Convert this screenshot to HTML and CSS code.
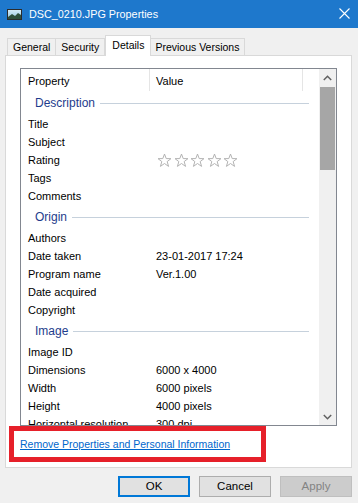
FILE: index.html
```html
<!DOCTYPE html>
<html>
<head>
<meta charset="utf-8">
<link rel="stylesheet" href="styles.css">
</head>
<body>
<div class="window">
  <div class="titlebar">
    <svg class="app-icon" width="15" height="11" viewBox="0 0 15 11">
      <defs>
        <linearGradient id="sky" x1="0" y1="0" x2="0" y2="1">
          <stop offset="0" stop-color="#d9eef8"/>
          <stop offset="1" stop-color="#8fc3de"/>
        </linearGradient>
      </defs>
      <rect x="0.5" y="0.5" width="14" height="10" fill="url(#sky)" stroke="#2b2b2b"/>
      <path d="M1 8 L5 5 L8 7 L11 4 L14 6 L14 10 L1 10 Z" fill="#2f4f3a"/>
    </svg>
    <span class="title">DSC_0210.JPG Properties</span>
    <svg class="close" width="11" height="11" viewBox="0 0 11 11">
      <path d="M0.5 0.5 L10.5 10.5 M10.5 0.5 L0.5 10.5" stroke="#ffffff" stroke-width="1.1" fill="none"/>
    </svg>
  </div>

  <div class="tabs">
    <div class="tab">General</div>
    <div class="tab">Security</div>
    <div class="tab active">Details</div>
    <div class="tab">Previous Versions</div>
  </div>

  <div class="panel">
    <div class="listbox">
      <div class="list">
        <div class="header">
          <div class="hcol c1">Property</div>
          <div class="hcol c2">Value</div>
          <div class="hcol c3"></div>
        </div>

        <div class="group"><span>Description</span></div>
        <div class="row"><span class="k">Title</span><span class="v"></span></div>
        <div class="row"><span class="k">Subject</span><span class="v"></span></div>
        <div class="row"><span class="k">Rating</span>
          <span class="v stars">
            <svg width="15" height="15" viewBox="0 0 14 14"><path class="star" d="M7 1 L8.6 5.2 L13 5.3 L9.5 8 L10.8 12.5 L7 9.8 L3.2 12.5 L4.5 8 L1 5.3 L5.4 5.2 Z"/></svg>
            <svg width="15" height="15" viewBox="0 0 14 14"><path class="star" d="M7 1 L8.6 5.2 L13 5.3 L9.5 8 L10.8 12.5 L7 9.8 L3.2 12.5 L4.5 8 L1 5.3 L5.4 5.2 Z"/></svg>
            <svg width="15" height="15" viewBox="0 0 14 14"><path class="star" d="M7 1 L8.6 5.2 L13 5.3 L9.5 8 L10.8 12.5 L7 9.8 L3.2 12.5 L4.5 8 L1 5.3 L5.4 5.2 Z"/></svg>
            <svg width="15" height="15" viewBox="0 0 14 14"><path class="star" d="M7 1 L8.6 5.2 L13 5.3 L9.5 8 L10.8 12.5 L7 9.8 L3.2 12.5 L4.5 8 L1 5.3 L5.4 5.2 Z"/></svg>
            <svg width="15" height="15" viewBox="0 0 14 14"><path class="star" d="M7 1 L8.6 5.2 L13 5.3 L9.5 8 L10.8 12.5 L7 9.8 L3.2 12.5 L4.5 8 L1 5.3 L5.4 5.2 Z"/></svg>
          </span>
        </div>
        <div class="row"><span class="k">Tags</span><span class="v"></span></div>
        <div class="row"><span class="k">Comments</span><span class="v"></span></div>

        <div class="group"><span>Origin</span></div>
        <div class="row"><span class="k">Authors</span><span class="v"></span></div>
        <div class="row"><span class="k">Date taken</span><span class="v">23-01-2017 17:24</span></div>
        <div class="row"><span class="k">Program name</span><span class="v">Ver.1.00</span></div>
        <div class="row"><span class="k">Date acquired</span><span class="v"></span></div>
        <div class="row"><span class="k">Copyright</span><span class="v"></span></div>

        <div class="group"><span>Image</span></div>
        <div class="row"><span class="k">Image ID</span><span class="v"></span></div>
        <div class="row"><span class="k">Dimensions</span><span class="v">6000 x 4000</span></div>
        <div class="row"><span class="k">Width</span><span class="v">6000 pixels</span></div>
        <div class="row"><span class="k">Height</span><span class="v">4000 pixels</span></div>
        <div class="row"><span class="k">Horizontal resolution</span><span class="v">300 dpi</span></div>
      </div>
      <div class="scrollbar">
        <div class="sb-btn">
          <svg width="9" height="6" viewBox="0 0 9 6"><path d="M0.8 5 L4.5 1.3 L8.2 5" stroke="#606060" stroke-width="1.5" fill="none"/></svg>
        </div>
        <div class="sb-track"><div class="sb-thumb"></div></div>
        <div class="sb-btn">
          <svg width="9" height="6" viewBox="0 0 9 6"><path d="M0.8 1 L4.5 4.7 L8.2 1" stroke="#606060" stroke-width="1.5" fill="none"/></svg>
        </div>
      </div>
    </div>
    <a class="link" href="#">Remove Properties and Personal Information</a>
    <div class="highlight"></div>
  </div>

  <div class="buttons">
    <div class="btn default">OK</div>
    <div class="btn">Cancel</div>
    <div class="btn disabled">Apply</div>
  </div>
</div>
</body>
</html>
```
FILE: styles.css
```css
html, body {
  margin: 0;
  padding: 0;
}
body {
  background: #f0f0f0;
  font-family: "Liberation Sans", Arial, sans-serif;
  font-size: 11px;
  color: #000;
}
.window {
  width: 358px;
  height: 503px;
  overflow: hidden;
}
.titlebar {
  height: 28px;
  background: #1e78cc;
  display: flex;
  align-items: center;
  color: #fff;
}
.app-icon {
  margin-left: 7px;
  flex: none;
}
.title {
  margin-left: 7px;
  font-size: 10.8px;
}
.close {
  margin-left: auto;
  margin-right: 8px;
  margin-top: -1px;
}

.tabs {
  display: flex;
  align-items: flex-end;
  height: 20px;
  margin: 8px 0 -1px 7px;
  position: relative;
  z-index: 1;
  font-size: 10.5px;
}
.tab {
  height: 17px;
  line-height: 16px;
  padding: 0 5px;
  border: 1px solid #d9d9d9;
  border-bottom: none;
  margin-bottom: 1px;
  margin-left: -1px;
  background: #f0f0f0;
  box-sizing: border-box;
  white-space: nowrap;
}
.tab:first-child {
  margin-left: 0;
}
.tab.active {
  height: 21px;
  line-height: 18px;
  margin-bottom: 0;
  background: #fff;
  padding: 0 6px;
  margin-left: 0;
  margin-right: -1px;
  position: relative;
  z-index: 2;
}

.panel {
  position: relative;
  margin: 0 6px 0 5px;
  height: 413px;
  box-sizing: border-box;
  border: 1px solid #d9d9d9;
  background: #fff;
  padding: 12px 14px 0 14px;
}
.listbox {
  display: flex;
  height: 358px;
  box-sizing: border-box;
  border: 1px solid #828790;
}
.list {
  flex: 1;
  overflow: hidden;
}
.header {
  display: flex;
  height: 22px;
  line-height: 24px;
}
.hcol {
  box-sizing: border-box;
  border-right: 1px solid #e5e5e5;
}
.c1 {
  width: 129px;
  padding-left: 7px;
}
.c2 {
  width: 153px;
  padding-left: 6px;
}
.c3 {
  border-right: none;
  flex: 1;
}
.group {
  height: 24px;
  display: flex;
  align-items: center;
  padding-left: 14px;
  color: #1e3c8c;
  font-size: 12px;
}
.group::after {
  content: "";
  flex: 1;
  height: 1px;
  background: #c6d1dc;
  margin-left: 5px;
  margin-right: 10px;
}
.row {
  display: grid;
  grid-template-columns: 128px 1fr;
  height: 18px;
  line-height: 18px;
  padding-left: 7px;
  white-space: nowrap;
}
.stars {
  display: flex;
  align-items: center;
  gap: 1.5px;
  margin-left: 1px;
}
.star {
  fill: #fff;
  stroke: #b0b0b0;
  stroke-width: 0.9;
  stroke-linejoin: round;
}
.scrollbar {
  width: 17px;
  flex: none;
  display: flex;
  flex-direction: column;
  background: #f0f0f0;
}
.sb-btn {
  height: 17px;
  display: flex;
  align-items: center;
  justify-content: center;
  flex: none;
}
.sb-track {
  flex: 1;
}
.sb-thumb {
  margin: 1px 1px 0 1px;
  height: 83px;
  background: #a6a6a6;
}

.link {
  display: block;
  margin-top: 11px;
  line-height: 14px;
  font-size: 10.5px;
  color: #0066cc;
  text-decoration: underline;
  width: max-content;
}
.highlight {
  position: absolute;
  left: 3px;
  top: 370px;
  width: 257px;
  height: 36px;
  box-sizing: border-box;
  border: 5px solid #e6202a;
}

.buttons {
  display: flex;
  justify-content: flex-end;
  gap: 9px;
  margin-top: 8px;
  padding-right: 6px;
}
.btn {
  width: 72px;
  height: 21px;
  box-sizing: border-box;
  border: 1px solid #adadad;
  background: #e1e1e1;
  text-align: center;
  line-height: 19px;
  font-size: 11.5px;
}
.btn.default {
  border-color: #0078d7;
  box-shadow: inset 0 0 0 1px #0078d7;
}
.btn.disabled {
  background: #cccccc;
  border-color: #bfbfbf;
  color: #838383;
}
```
